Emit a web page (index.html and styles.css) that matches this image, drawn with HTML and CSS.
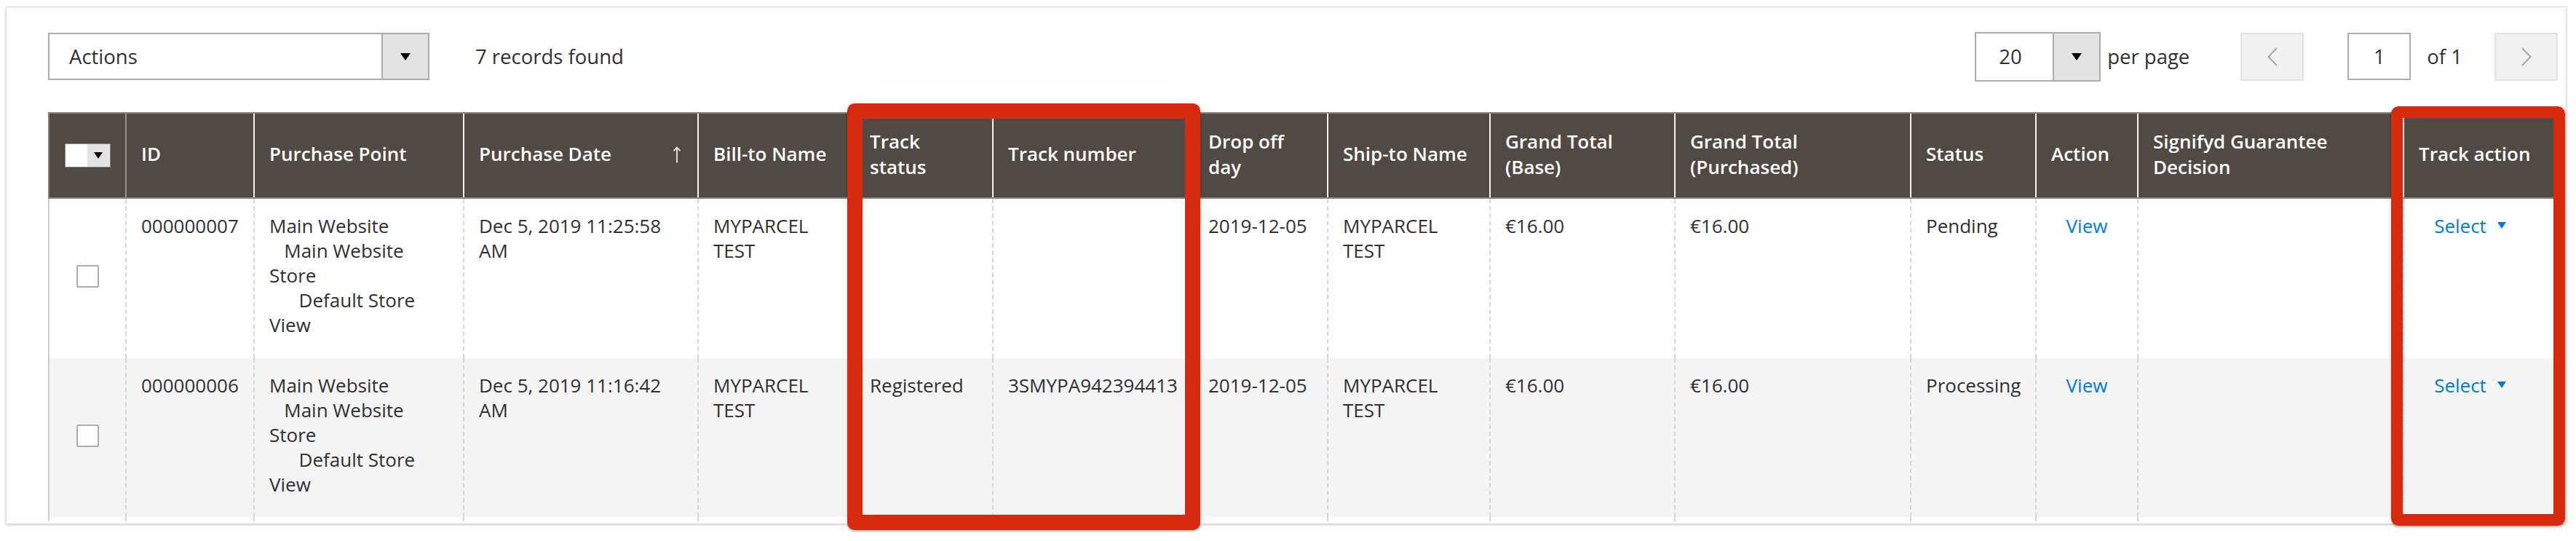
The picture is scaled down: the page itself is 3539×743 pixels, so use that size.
FILE: index.html
```html
<!DOCTYPE html>
<html lang="en">
<head>
<meta charset="utf-8">
<title>Orders grid</title>
<link rel="stylesheet" href="styles.css">
</head>
<body>
<div class="card">
  <div class="toolbar">
    <div class="tb-left">
      <div class="select actions-select">
        <span class="select-value">Actions</span>
        <span class="select-arrow"><span class="tri"></span></span>
      </div>
      <span class="records">7 records found</span>
    </div>
    <div class="tb-right">
      <div class="select perpage-select">
        <span class="select-value">20</span>
        <span class="select-arrow"><span class="tri"></span></span>
      </div>
      <span class="perpage-label">per page</span>
      <span class="pager-btn prev"><svg width="16" height="26" viewBox="0 0 16 26"><path d="M14 1L2.5 13 14 25" fill="none" stroke="#a8a8a8" stroke-width="2"/></svg></span>
      <span class="page-input">1</span>
      <span class="page-of">of 1</span>
      <span class="pager-btn next"><svg width="16" height="26" viewBox="0 0 16 26"><path d="M2 1l11.5 12L2 25" fill="none" stroke="#a8a8a8" stroke-width="2"/></svg></span>
    </div>
  </div>

  <div class="grid">
    <div class="row head">
      <div class="cell c-check"><span class="multicheck"><span class="mc-box"></span><span class="mc-arrow"><span class="tri small"></span></span></span></div>
      <div class="cell c-id">ID</div>
      <div class="cell">Purchase Point</div>
      <div class="cell sorted"><span>Purchase Date</span><svg class="sort-arrow" width="12" height="23" viewBox="0 0 12 23"><path d="M6 22.5V1.5M1.5 6.2L6 1.5l4.5 4.7" fill="none" stroke="#fff" stroke-width="1.6"/></svg></div>
      <div class="cell">Bill-to Name</div>
      <div class="cell">Track status</div>
      <div class="cell">Track number</div>
      <div class="cell">Drop off day</div>
      <div class="cell">Ship-to Name</div>
      <div class="cell">Grand Total (Base)</div>
      <div class="cell">Grand Total (Purchased)</div>
      <div class="cell">Status</div>
      <div class="cell">Action</div>
      <div class="cell">Signifyd Guarantee Decision</div>
      <div class="cell">Track action</div>
    </div>

    <div class="row data">
      <div class="cell c-check"><span class="checkbox"></span></div>
      <div class="cell">000000007</div>
      <div class="cell">Main Website<br>&nbsp;&nbsp;&nbsp;Main Website Store<br>&nbsp;&nbsp;&nbsp;&nbsp;&nbsp;&nbsp;Default Store View</div>
      <div class="cell">Dec 5, 2019 11:25:58 AM</div>
      <div class="cell">MYPARCEL TEST</div>
      <div class="cell"></div>
      <div class="cell"></div>
      <div class="cell">2019-12-05</div>
      <div class="cell">MYPARCEL TEST</div>
      <div class="cell">€16.00</div>
      <div class="cell">€16.00</div>
      <div class="cell">Pending</div>
      <div class="cell c-center"><a class="link" href="#">View</a></div>
      <div class="cell"></div>
      <div class="cell c-select"><a class="link" href="#">Select</a><span class="tri blue"></span></div>
    </div>

    <div class="row data alt">
      <div class="cell c-check"><span class="checkbox"></span></div>
      <div class="cell">000000006</div>
      <div class="cell">Main Website<br>&nbsp;&nbsp;&nbsp;Main Website Store<br>&nbsp;&nbsp;&nbsp;&nbsp;&nbsp;&nbsp;Default Store View</div>
      <div class="cell">Dec 5, 2019 11:16:42 AM</div>
      <div class="cell">MYPARCEL TEST</div>
      <div class="cell">Registered</div>
      <div class="cell nowrap">3SMYPA942394413</div>
      <div class="cell">2019-12-05</div>
      <div class="cell">MYPARCEL TEST</div>
      <div class="cell">€16.00</div>
      <div class="cell">€16.00</div>
      <div class="cell">Processing</div>
      <div class="cell c-center"><a class="link" href="#">View</a></div>
      <div class="cell"></div>
      <div class="cell c-select"><a class="link" href="#">Select</a><span class="tri blue"></span></div>
    </div>

    <div class="row tail">
      <div class="cell c-check"></div>
      <div class="cell"></div><div class="cell"></div><div class="cell"></div><div class="cell"></div>
      <div class="cell"></div><div class="cell"></div><div class="cell"></div><div class="cell"></div>
      <div class="cell"></div><div class="cell"></div><div class="cell"></div><div class="cell"></div>
      <div class="cell"></div><div class="cell"></div>
    </div>
  </div>
</div>

<div class="mark mark-track"></div>
<div class="mark mark-action"></div>
</body>
</html>
```

FILE: styles.css
```css
html, body {
  margin: 0;
  padding: 0;
  background: #fff;
}

body {
  position: relative;
  width: 3539px;
  height: 743px;
  overflow: hidden;
  font-family: "Open Sans", "Liberation Sans", sans-serif;
  color: #303030;
}

.card {
  box-sizing: border-box;
  margin: 9px 0 0 8px;
  width: 3518px;
  height: 711px;
  padding: 34px 11px 0 57px;
  border: 1px solid #dcdcdc;
  box-shadow: 0 1px 3px rgba(0, 0, 0, 0.22);
  background: #fff;
}

/* ---------- toolbar ---------- */
.toolbar {
  display: flex;
  justify-content: space-between;
  align-items: center;
  height: 67px;
  font-size: 27.5px;
}

.tb-left,
.tb-right {
  display: flex;
  align-items: center;
}

.tb-left {
  gap: 63px;
}

.select {
  box-sizing: border-box;
  display: flex;
  align-items: stretch;
  border: 2px solid #adadad;
  background: #fff;
}

.actions-select {
  width: 524px;
  height: 65px;
}

.perpage-select {
  width: 173px;
  height: 68px;
}

.select-value {
  flex: 1;
  display: flex;
  align-items: center;
  padding-left: 27px;
}

.perpage-select .select-value {
  padding-left: 31px;
}

.select-arrow {
  width: 62px;
  display: flex;
  align-items: center;
  justify-content: center;
  background: #e3e3e3;
  border-left: 2px solid #adadad;
}

.tri {
  display: inline-block;
  width: 0;
  height: 0;
  border-left: 7px solid transparent;
  border-right: 7px solid transparent;
  border-top: 10px solid #000;
}

.tri.small {
  border-left-width: 6px;
  border-right-width: 6px;
  border-top-width: 9px;
}

.tri.blue {
  border-left-width: 6px;
  border-right-width: 6px;
  border-top: 9px solid #007bdb;
  margin-left: 15px;
}

.perpage-label {
  margin-left: 9px;
}

.pager-btn {
  box-sizing: border-box;
  width: 87px;
  height: 66px;
  display: flex;
  align-items: center;
  justify-content: center;
  background: #f0f0f0;
  border: 2px solid #e3e3e3;
}

.pager-btn.prev {
  margin-left: 70px;
}

.pager-btn.next {
  margin-left: 44px;
}

.page-input {
  box-sizing: border-box;
  width: 87px;
  height: 65px;
  margin-left: 60px;
  display: flex;
  align-items: center;
  justify-content: center;
  border: 2px solid #adadad;
  background: #fff;
}

.page-of {
  margin-left: 22px;
}

/* ---------- grid ---------- */
.grid {
  margin-top: 43px;
  width: 3448px;
}

.row {
  display: grid;
  grid-template-columns: 106px 176px 288px 322px 215px 190px 275px 185px 223px 254px 324px 172px 140px 365px 213px;
}

.cell {
  box-sizing: border-box;
  min-width: 0;
}

.head {
  box-sizing: border-box;
  height: 119px;
  background: #514943;
  border-top: 2px solid #8a837f;
  border-bottom: 2px solid #8a837f;
}

.head .cell {
  display: flex;
  align-items: center;
  padding: 0 22px 4px 20px;
  border-left: 2px solid #f3f2f1;
  color: #fff;
  font-weight: 600;
  font-size: 26px;
  line-height: 35px;
}

.head .c-check {
  border-left-color: #8a837f;
  justify-content: center;
  padding: 0 0 0 0;
}

.head .c-id {
  border-left-color: #9a9390;
}

.head .sorted {
  justify-content: space-between;
}

.sort-arrow {
  flex: none;
  margin-top: 2px;
}

.multicheck {
  display: flex;
  height: 31px;
  border: 1px solid #8a837f;
}

.mc-box {
  width: 30px;
  background: #fff;
}

.mc-arrow {
  width: 31px;
  display: flex;
  align-items: center;
  justify-content: center;
  background: #e3e3e3;
}

.data {
  height: 219px;
  font-size: 26px;
  line-height: 34px;
}

.data.alt {
  height: 218px;
  background: #f4f4f4;
}

.data .cell {
  padding: 20px 20px 0 20px;
  border-left: 2px dashed #d6d6d6;
}

.data .c-check,
.tail .c-check {
  border-left: 2px solid #cfcfcf;
}

.data .c-check {
  display: flex;
  align-items: center;
  justify-content: center;
  padding: 0 0 6px 0;
}

.checkbox {
  box-sizing: border-box;
  width: 31px;
  height: 31px;
  border: 2px solid #adadad;
  border-radius: 2px;
  background: #fff;
}

.nowrap {
  white-space: nowrap;
}

.c-center {
  text-align: center;
}

.c-select {
  display: flex;
  justify-content: center;
  align-items: flex-start;
  padding-right: 50px !important;
}

.c-select .tri {
  margin-top: 12px;
}

.link {
  color: #007bdb;
  text-decoration: none;
}

.tail {
  height: 6px;
}

.tail .cell {
  border-left: 2px dashed #d6d6d6;
}

/* ---------- annotation frames ---------- */
.mark {
  position: absolute;
  box-sizing: border-box;
  border: 21px solid #d72a0c;
  border-radius: 10px;
  box-shadow: 0 2px 3px rgba(0, 0, 0, 0.3);
}

.mark-track {
  left: 1164px;
  top: 142px;
  width: 485px;
  height: 586px;
}

.mark-action {
  left: 3285px;
  top: 146px;
  width: 239px;
  height: 576px;
  border-width: 16px;
}
```
